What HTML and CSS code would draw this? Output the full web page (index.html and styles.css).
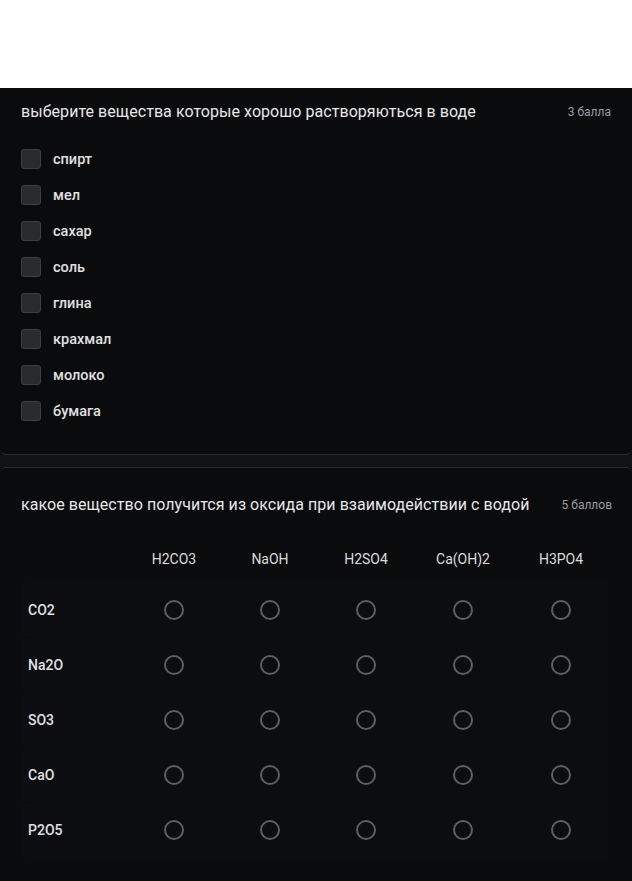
FILE: index.html
```html
<!DOCTYPE html>
<html lang="ru">
<head>
<meta charset="utf-8">
<title>Форма</title>
<link rel="stylesheet" href="styles.css">
</head>
<body>
<div class="top"></div>
<section class="card card-first">
  <div class="q-head">
    <div class="q-title">выберите вещества которые хорошо растворяються в воде</div>
    <div class="q-points">3 балла</div>
  </div>
  <ul class="options">
    <li class="option"><span class="box"></span><span class="opt-label">спирт</span></li>
    <li class="option"><span class="box"></span><span class="opt-label">мел</span></li>
    <li class="option"><span class="box"></span><span class="opt-label">сахар</span></li>
    <li class="option"><span class="box"></span><span class="opt-label">соль</span></li>
    <li class="option"><span class="box"></span><span class="opt-label">глина</span></li>
    <li class="option"><span class="box"></span><span class="opt-label">крахмал</span></li>
    <li class="option"><span class="box"></span><span class="opt-label">молоко</span></li>
    <li class="option"><span class="box"></span><span class="opt-label">бумага</span></li>
  </ul>
</section>
<div class="gap"></div>
<section class="card card-second">
  <div class="q-head">
    <div class="q-title">какое вещество получится из оксида при взаимодействии с водой</div>
    <div class="q-points">5 баллов</div>
  </div>
  <div class="grid">
    <div class="grid-head">
      <div class="cell-label"></div>
      <div class="cell">H2CO3</div>
      <div class="cell">NaOH</div>
      <div class="cell">H2SO4</div>
      <div class="cell">Ca(OH)2</div>
      <div class="cell">H3PO4</div>
    </div>
    <div class="grid-row">
      <div class="cell-label">CO2</div>
      <div class="cell"><span class="radio"></span></div>
      <div class="cell"><span class="radio"></span></div>
      <div class="cell"><span class="radio"></span></div>
      <div class="cell"><span class="radio"></span></div>
      <div class="cell"><span class="radio"></span></div>
    </div>
    <div class="grid-row">
      <div class="cell-label">Na2O</div>
      <div class="cell"><span class="radio"></span></div>
      <div class="cell"><span class="radio"></span></div>
      <div class="cell"><span class="radio"></span></div>
      <div class="cell"><span class="radio"></span></div>
      <div class="cell"><span class="radio"></span></div>
    </div>
    <div class="grid-row">
      <div class="cell-label">SO3</div>
      <div class="cell"><span class="radio"></span></div>
      <div class="cell"><span class="radio"></span></div>
      <div class="cell"><span class="radio"></span></div>
      <div class="cell"><span class="radio"></span></div>
      <div class="cell"><span class="radio"></span></div>
    </div>
    <div class="grid-row">
      <div class="cell-label">CaO</div>
      <div class="cell"><span class="radio"></span></div>
      <div class="cell"><span class="radio"></span></div>
      <div class="cell"><span class="radio"></span></div>
      <div class="cell"><span class="radio"></span></div>
      <div class="cell"><span class="radio"></span></div>
    </div>
    <div class="grid-row">
      <div class="cell-label">P2O5</div>
      <div class="cell"><span class="radio"></span></div>
      <div class="cell"><span class="radio"></span></div>
      <div class="cell"><span class="radio"></span></div>
      <div class="cell"><span class="radio"></span></div>
      <div class="cell"><span class="radio"></span></div>
    </div>
  </div>
</section>
</body>
</html>
```
FILE: styles.css
```css
html, body {
  margin: 0;
  padding: 0;
}
body {
  background: #0a0b0d;
  font-family: Roboto, "Noto Sans", "Liberation Sans", sans-serif;
  color: #e4e4e4;
  height: 881px;
  overflow: hidden;
}
.top {
  height: 88px;
  background: #ffffff;
}
.card {
  background: #0a0b0d;
  padding: 0 21px 0 21px;
}
.card-first {
  height: 367px;
  padding-top: 12px;
  box-sizing: border-box;
  border-bottom: 1px solid #2a2b2e;
  border-radius: 0 0 6px 6px;
}
.gap {
  height: 12px;
  background: #121316;
}
.card-second {
  border-top: 1px solid #2a2b2e;
  border-radius: 6px 6px 0 0;
  padding-top: 25px;
  padding-right: 20px;
  padding-left: 22px;
  height: 414px;
  box-sizing: border-box;
}
.q-head {
  display: flex;
  justify-content: space-between;
  align-items: center;
  height: 24px;
}
.q-title {
  font-size: 16px;
  line-height: 24px;
  color: #e8e8e8;
  letter-spacing: 0.05px;
}
.card-second .q-title {
  margin-left: -1px;
}
.q-points {
  font-size: 12px;
  color: #9a9ca0;
  line-height: 24px;
}
.options {
  list-style: none;
  margin: 17px 0 0 0;
  padding: 0;
}
.option {
  display: flex;
  align-items: center;
  height: 36px;
  gap: 12px;
}
.box {
  width: 18px;
  height: 18px;
  border: 1px solid #3d3e41;
  border-radius: 3px;
  background: #2a2b2e;
}
.opt-label {
  font-size: 14.5px;
  font-weight: 500;
  color: #e0e0e0;
}
.grid {
  margin-top: 19px;
  display: flex;
  flex-direction: column;
  gap: 1px;
}
.grid-head,
.grid-row {
  display: grid;
  grid-template-columns: 104px 96px 96px 96px 98px 98px 1fr;
  align-items: center;
}
.grid-head {
  height: 46px;
}
.grid-row {
  height: 54px;
  background: #0c0d10;
  border-radius: 4px;
}
.cell {
  display: flex;
  justify-content: center;
  align-items: center;
  font-size: 14px;
  color: #dcdcdc;
}
.cell-label {
  padding-left: 6px;
  font-size: 14px;
  font-weight: 500;
  color: #e0e0e0;
}
.radio {
  width: 16px;
  height: 16px;
  border: 2px solid #5e5f62;
  border-radius: 50%;
}
```
